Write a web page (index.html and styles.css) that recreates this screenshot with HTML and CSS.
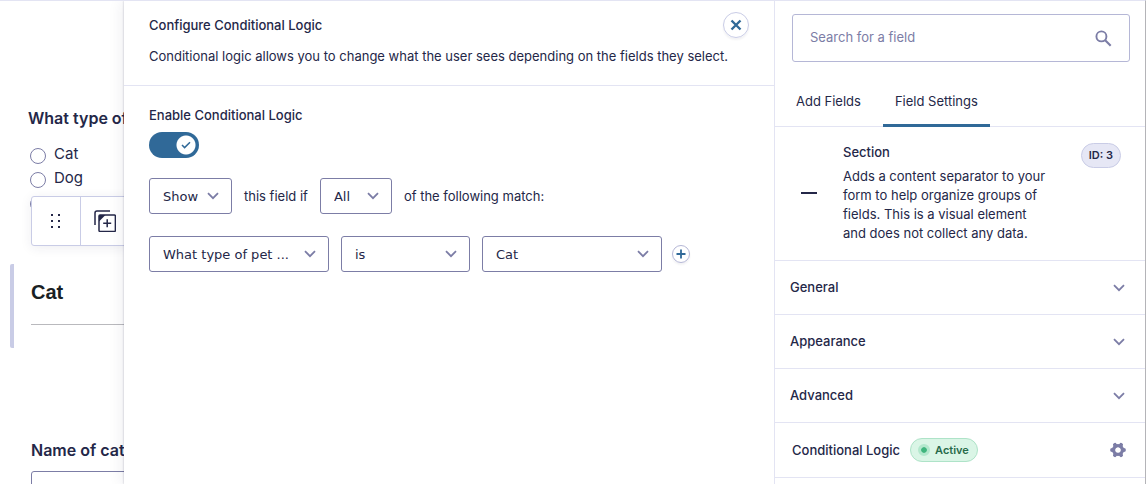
FILE: index.html
```html
<!DOCTYPE html>
<html lang="en">
<head>
  <meta charset="UTF-8" />
  <meta name="viewport" content="width=device-width, initial-scale=1.0" />
  <title>Form Editor</title>
  <link rel="stylesheet" href="styles.css">
</head>
<body>
  <svg width="0" height="0" class="sprite" aria-hidden="true">
    <symbol id="chevron" viewBox="0 0 12 8">
      <path d="M1 1.2l5 5 5-5" fill="none" stroke="currentColor" stroke-width="1.8" />
    </symbol>
  </svg>

  <div class="editor">
    <!-- Form preview -->
    <main class="canvas">
      <fieldset class="field choices">
        <legend>What type of pet</legend>
        <label><input type="radio" name="pet" /> Cat</label>
        <label><input type="radio" name="pet" /> Dog</label>
        <label><input type="radio" name="pet" aria-label="Other" /></label>
        <div class="toolbar">
          <button type="button" aria-label="Move">
            <svg width="12" height="18" viewBox="0 0 12 18" fill="#242748">
              <rect x="1" y="2" width="2" height="2" /><rect x="8" y="2" width="2" height="2" />
              <rect x="1" y="8" width="2" height="2" /><rect x="8" y="8" width="2" height="2" />
              <rect x="1" y="14" width="2" height="2" /><rect x="8" y="14" width="2" height="2" />
            </svg>
          </button>
          <button type="button" aria-label="Duplicate">
            <svg width="22" height="22" viewBox="0 0 22 22" fill="none" stroke="#242748" stroke-width="1.5">
              <path d="M1 15V3q0-2 2-2h13" />
              <rect x="5" y="5" width="16.4" height="16.4" rx="1" />
              <path d="M5 5h6.500l-6.500 6.500z" fill="#242748" stroke="none" />
              <path d="M13.200 9.200v8M9.200 13.200h8" />
            </svg>
          </button>
        </div>
      </fieldset>

      <section class="field section-field">
        <h2>Cat</h2>
      </section>

      <div class="field text-field">
        <label for="cat-name">Name of cat</label>
        <input type="text" id="cat-name" />
      </div>
    </main>

    <!-- Conditional logic flyout -->
    <section class="flyout">
      <header class="flyout-header">
        <div class="flyout-title">
          <h1>Configure Conditional Logic</h1>
          <button type="button" class="round-btn" aria-label="Close">
            <svg width="12" height="12" viewBox="0 0 12 12"><path d="M1.5 1.5l9 9M10.5 1.5l-9 9" stroke="currentColor" stroke-width="2.4" /></svg>
          </button>
        </div>
        <p>Conditional logic allows you to change what the user sees depending on the fields they select.</p>
      </header>

      <div class="flyout-body">
        <label for="enable-logic" class="enable-label">Enable Conditional Logic</label>
        <span class="toggle">
          <input type="checkbox" id="enable-logic" checked />
          <svg width="10" height="8" viewBox="0 0 10 8"><path d="M1 4l2.6 2.6L9 1.2" fill="none" stroke="#306998" stroke-width="1.5" /></svg>
        </span>

        <div class="logic-row">
          <span class="select action">
            <select aria-label="Action"><option>Show</option><option>Hide</option></select>
            <svg class="chevron"><use href="#chevron" /></svg>
          </span>
          <span>this field if</span>
          <span class="select scope">
            <select aria-label="Scope"><option>All</option><option>Any</option></select>
            <svg class="chevron"><use href="#chevron" /></svg>
          </span>
          <span>of the following match:</span>
        </div>

        <div class="logic-row">
          <span class="select wide">
            <select aria-label="Field"><option>What type of pet ...</option></select>
            <svg class="chevron"><use href="#chevron" /></svg>
          </span>
          <span class="select operator">
            <select aria-label="Operator"><option>is</option><option>is not</option></select>
            <svg class="chevron"><use href="#chevron" /></svg>
          </span>
          <span class="select wide">
            <select aria-label="Value"><option>Cat</option><option>Dog</option></select>
            <svg class="chevron"><use href="#chevron" /></svg>
          </span>
          <button type="button" class="round-btn small" aria-label="Add rule">
            <svg width="10" height="10" viewBox="0 0 10 10"><path d="M5 .5v9M.5 5h9" stroke="currentColor" stroke-width="1.8" /></svg>
          </button>
        </div>
      </div>
    </section>

    <!-- Sidebar -->
    <aside class="sidebar">
      <div class="search">
        <input type="search" placeholder="Search for a field" aria-label="Search for a field" />
        <svg width="17" height="17" viewBox="0 0 18 18" fill="none" stroke="#7c7da6"><circle cx="6.8" cy="6.8" r="5.3" stroke-width="2" /><path d="M10.8 10.8l5.8 5.8" stroke-width="2.3" /></svg>
      </div>

      <nav class="tabs">
        <button type="button">Add Fields</button>
        <button type="button" class="active">Field Settings</button>
      </nav>

      <div class="field-info">
        <span class="dash"></span>
        <div class="field-text">
          <h2>Section</h2>
          <p>Adds a content separator to your form to help organize groups of fields. This is a visual element and does not collect any data.</p>
        </div>
        <span class="badge">ID: 3</span>
      </div>

      <button type="button" class="panel-row">General <svg class="chevron"><use href="#chevron" /></svg></button>
      <button type="button" class="panel-row">Appearance <svg class="chevron"><use href="#chevron" /></svg></button>
      <button type="button" class="panel-row">Advanced <svg class="chevron"><use href="#chevron" /></svg></button>
      <button type="button" class="panel-row logic">
        Conditional Logic
        <span class="status">Active</span>
        <svg class="gear" width="16" height="16" viewBox="0 0 16 16">
          <circle cx="8" cy="8" r="4.3" fill="none" stroke="#7c7da6" stroke-width="3.6" />
          <g stroke="#7c7da6" stroke-width="3.8" stroke-linecap="round">
            <path d="M2 8h1M13 8h1M4.9 2.8l.5.9M10.600 12.300l.5.9M11.100 2.800l-.5.9M5.400 12.300l-.5.9" />
          </g>
          <circle cx="8" cy="8" r="2.6" fill="#fff" />
        </svg>
      </button>
    </aside>
  </div>
</body>
</html>
```
FILE: styles.css
```css
* {
  box-sizing: border-box;
}
body {
  margin: 0;
  font-family: Inter, sans-serif;
  font-size: 13px;
  line-height: 19px;
  color: #242748;
  background: #fff;
}
h1, h2, p {
  margin: 0;
  font-size: 13px;
}
h1, h2 {
  font-weight: 500;
}
button, input, select {
  font: inherit;
  color: inherit;
}
button {
  background: none;
  border: none;
  padding: 0;
  cursor: pointer;
}
.sprite {
  position: absolute;
}
.editor {
  display: flex;
  height: 100vh;
  overflow: hidden;
  border-top: 1px solid #e3e4f3;
  border-right: 1px solid #b4b4b8;
}
.chevron {
  width: 12px;
  height: 8px;
  color: #7c7da6;
}

/* form preview */
.canvas {
  flex: 0 0 124px;
  overflow: hidden;
  white-space: nowrap;
  padding: 107px 0 0 10px;
}
.field {
  width: 600px;
}
.choices {
  position: relative;
  border: 0;
  margin: 0;
  padding: 0 0 0 20px;
  height: 156px;
}
.choices legend {
  margin-left: -2px;
  padding: 0;
  font-size: 16px;
  line-height: 20px;
  font-weight: 600;
}
.choices label {
  display: flex;
  align-items: center;
  gap: 8px;
  height: 24px;
  font-size: 15px;
}
.choices legend + label {
  margin-top: 13px;
}
.choices input {
  appearance: none;
  width: 16px;
  height: 16px;
  margin: 5px 0 0;
  border: 1px solid #7c7da6;
  border-radius: 50%;
  background: #fff;
}
.toolbar {
  position: absolute;
  top: 68px;
  left: 21px;
  display: flex;
  height: 50px;
  background: #fff;
  border: 1px solid #c9cce6;
  border-radius: 3px;
  box-shadow: 0 2px 12px rgba(36, 39, 72, 0.08);
}
.toolbar button {
  display: flex;
  align-items: center;
  justify-content: center;
  width: 48px;
}
.toolbar button + button {
  border-left: 1px solid #c9cce6;
}
.section-field {
  height: 84px;
  padding: 14px 0 0 17px;
  border-left: 4px solid #c9cce6;
  border-radius: 2px;
}
.section-field h2 {
  height: 47px;
  border-bottom: 1px solid #b9b9bd;
  font-family: "Liberation Sans", Arial, sans-serif;
  font-size: 20px;
  line-height: 28px;
  font-weight: 700;
  color: #1a1f24;
}
.text-field {
  padding: 92px 0 0 21px;
}
.text-field label {
  display: block;
  font-size: 16px;
  line-height: 20px;
  font-weight: 600;
}
.text-field input {
  width: 100%;
  height: 40px;
  margin-top: 11px;
  border: 1px solid #7c7da6;
  border-radius: 3px;
}

/* flyout */
.flyout {
  position: relative;
  flex: 1;
  background: #fff;
  box-shadow: 0 0 2px rgba(36, 39, 72, 0.3), -2px 0 14px rgba(36, 39, 72, 0.08);
}
.flyout-header {
  padding: 11px 25px 19px;
  border-bottom: 1px solid #e3e4f3;
}
.flyout-title {
  display: flex;
  align-items: center;
  justify-content: space-between;
  margin-bottom: 9px;
}
.round-btn {
  display: flex;
  align-items: center;
  justify-content: center;
  width: 26px;
  height: 26px;
  border: 1px solid #c9cce6;
  border-radius: 50%;
  color: #306998;
  box-shadow: 0 2px 2px rgba(36, 39, 72, 0.06);
}
.round-btn.small {
  width: 18px;
  height: 18px;
  margin-left: -2px;
  border-color: #b5b7d6;
}
.flyout-body {
  padding: 20px 25px;
}
.enable-label {
  display: block;
  font-weight: 500;
}
.toggle {
  display: grid;
  align-items: center;
  width: 50px;
  margin-top: 7px;
}
.toggle input, .toggle svg {
  grid-area: 1 / 1;
}
.toggle svg {
  justify-self: end;
  margin-right: 8px;
  pointer-events: none;
}
.toggle input {
  appearance: none;
  width: 50px;
  height: 26px;
  margin: 0;
  border-radius: 13px;
  background: radial-gradient(circle at 37px 13px, #fff 9px, transparent 10px) #306998;
}
.logic-row {
  display: flex;
  align-items: center;
  gap: 12px;
  margin-top: 20px;
}
.logic-row + .logic-row {
  margin-top: 22px;
}
.select {
  display: grid;
  align-items: center;
}
.select select, .select .chevron {
  grid-area: 1 / 1;
}
.select .chevron {
  justify-self: end;
  margin-right: 13px;
  pointer-events: none;
}
.select select {
  appearance: none;
  width: 100%;
  height: 36px;
  padding: 0 13px;
  font-family: "DejaVu Sans", sans-serif;
  background: #fff;
  border: 1px solid #7c7da6;
  border-radius: 3px;
}
.action {
  width: 83px;
}
.scope {
  width: 72px;
}
.operator {
  width: 129px;
}
.wide {
  width: 180px;
}

/* sidebar */
.sidebar {
  position: relative;
  flex: 0 0 371px;
  background: #fff;
  border-left: 1px solid #e3e4f3;
}
.search {
  display: flex;
  align-items: center;
  height: 48px;
  margin: 13px 15px 0 17px;
  padding: 0 17px;
  border: 1px solid #b5b7d6;
  border-radius: 3px;
}
.search input {
  flex: 1;
  min-width: 0;
  padding: 0 0 2px;
  border: none;
  outline: none;
}
.search input::placeholder {
  color: #7c7da6;
}
.tabs {
  display: flex;
  gap: 10px;
  height: 65px;
  padding: 15px 9px 0;
  border-bottom: 1px solid #e3e4f3;
}
.tabs button {
  height: 50px;
  padding: 2px 12px 0;
  border-bottom: 3px solid transparent;
}
.tabs .active {
  border-color: #306998;
}
.field-info {
  display: flex;
  align-items: flex-start;
  padding: 16px 24px 17px 26px;
  border-bottom: 1px solid #e3e4f3;
}
.dash {
  flex: none;
  align-self: center;
  width: 16px;
  height: 2px;
  background: #242748;
}
.field-text {
  flex: 1;
  padding: 0 30px 0 26px;
}
.field-text h2 {
  margin-bottom: 5px;
}
.badge {
  padding: 2px 7px;
  font-size: 11px;
  font-weight: 600;
  background: #e6e7f5;
  border: 1px solid #c9cce6;
  border-radius: 13px;
}
.panel-row {
  display: flex;
  align-items: center;
  justify-content: space-between;
  width: 100%;
  height: 54px;
  padding: 0 20px 0 15px;
  font-weight: 500;
  border-bottom: 1px solid #e3e4f3;
}
.panel-row.logic {
  height: 55px;
  padding: 0 19px 0 17px;
}
.status {
  display: flex;
  align-items: center;
  gap: 5px;
  height: 24px;
  margin: 0 auto 0 10px;
  padding: 0 8px 0 7px;
  font-size: 11px;
  font-weight: 600;
  color: #276a4a;
  background: #daf5e6;
  border: 1px solid #aee3c8;
  border-radius: 12px;
}
.status::before {
  content: "";
  width: 6px;
  height: 6px;
  border: 3px solid #b3e8cd;
  border-radius: 50%;
  background: #3fb57d;
  background-clip: padding-box;
}
```
